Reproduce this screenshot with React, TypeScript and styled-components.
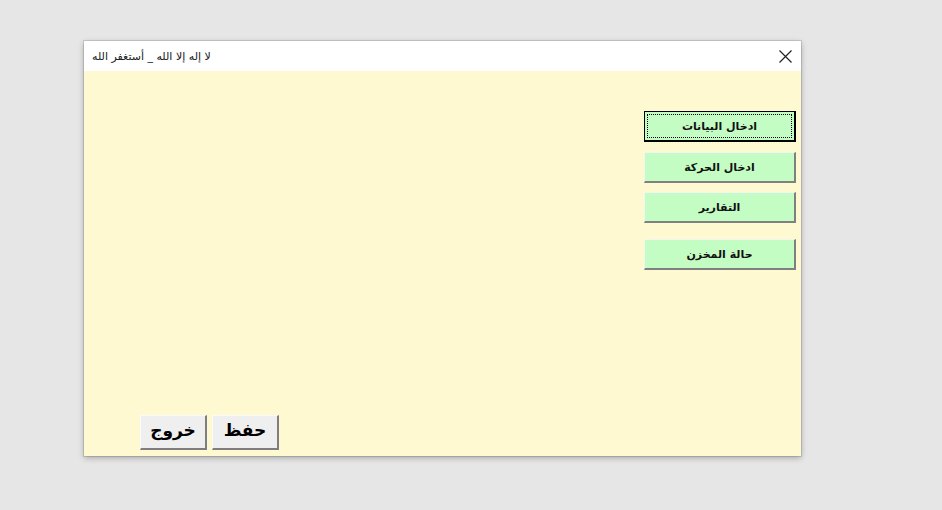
import React from "react";
import styled, { createGlobalStyle } from "styled-components";

const Global = createGlobalStyle`
  html, body { margin: 0; padding: 0; background: #e6e6e6; }
  body { width: 942px; height: 510px; overflow: hidden; font-family: "DejaVu Sans", "Liberation Sans", sans-serif; }
`;

const Page = styled.div`
  padding: 41px 0 0 84px;
`;

const Window = styled.div`
  width: 717px;
  height: 415px;
  display: flex;
  flex-direction: column;
  background: #fef9d0;
  box-shadow: 0 0 0 1px rgba(0,0,0,0.12), 0 2px 6px rgba(0,0,0,0.28);
`;

const TitleBar = styled.div`
  height: 30px;
  flex: none;
  background: #ffffff;
  display: flex;
  align-items: center;
  justify-content: space-between;
  padding: 0 8px 0 8px;
`;

const Title = styled.span`
  direction: rtl;
  font-family: "DejaVu Sans", sans-serif;
  font-size: 11px;
  color: #1a1a1a;
`;

const Close = styled.button`
  width: 16px;
  height: 16px;
  border: none;
  background: transparent;
  padding: 0;
  display: flex;
  align-items: center;
  justify-content: center;
`;

const Body = styled.div`
  flex: 1;
  display: flex;
  flex-direction: column;
  padding: 40px 5px 6px 56px;
`;

const MenuColumn = styled.div`
  align-self: flex-end;
  display: flex;
  flex-direction: column;
  width: 152px;
`;

const MenuButton = styled.button<{ $focused?: boolean; $gap: number }>`
  height: 31px;
  margin-top: ${(p) => p.$gap}px;
  background: #c4fdc4;
  border-style: solid;
  border-width: 1px 2px 2px 1px;
  border-color: ${(p) => (p.$focused ? "#000 #000 #000 #000" : "#f4f4f4 #808080 #808080 #f4f4f4")};
  padding: 0;
  position: relative;
  direction: rtl;
  font-family: "DejaVu Sans", sans-serif;
  font-weight: bold;
  font-size: 11px;
  color: #111;
  display: flex;
  align-items: center;
  justify-content: center;
  ${(p) =>
    p.$focused
      ? `
    &::after {
      content: "";
      position: absolute;
      inset: 2px;
      border: 1px dotted #000;
    }
  `
      : ""}
`;

const BottomRow = styled.div`
  margin-top: auto;
  display: flex;
  gap: 5px;
`;

const BigButton = styled.button`
  width: 67px;
  height: 35px;
  background: #efefef;
  border-style: solid;
  border-width: 1px 2px 2px 1px;
  border-color: #fafafa #7e7e7e #7e7e7e #fafafa;
  padding: 0 0 4px;
  direction: rtl;
  font-family: "DejaVu Sans", sans-serif;
  font-weight: bold;
  font-size: 17px;
  color: #000;
`;

export default function App() {
  return (
    <>
      <Global />
      <Page>
        <Window>
          <TitleBar>
            <Title>لا إله إلا الله _ أستغفر الله</Title>
            <Close aria-label="close">
              <svg width="13" height="13" viewBox="0 0 13 13">
                <path d="M0.5 0.5 L12.5 12.5 M12.5 0.5 L0.5 12.5" stroke="#222" strokeWidth="1.2" />
              </svg>
            </Close>
          </TitleBar>
          <Body>
            <MenuColumn>
              <MenuButton $focused $gap={0}>ادخال البيانات</MenuButton>
              <MenuButton $gap={10}>ادخال الحركة</MenuButton>
              <MenuButton $gap={9}>التقارير</MenuButton>
              <MenuButton $gap={16}>حالة المخزن</MenuButton>
            </MenuColumn>
            <BottomRow>
              <BigButton>خروج</BigButton>
              <BigButton>حفظ</BigButton>
            </BottomRow>
          </Body>
        </Window>
      </Page>
    </>
  );
}
